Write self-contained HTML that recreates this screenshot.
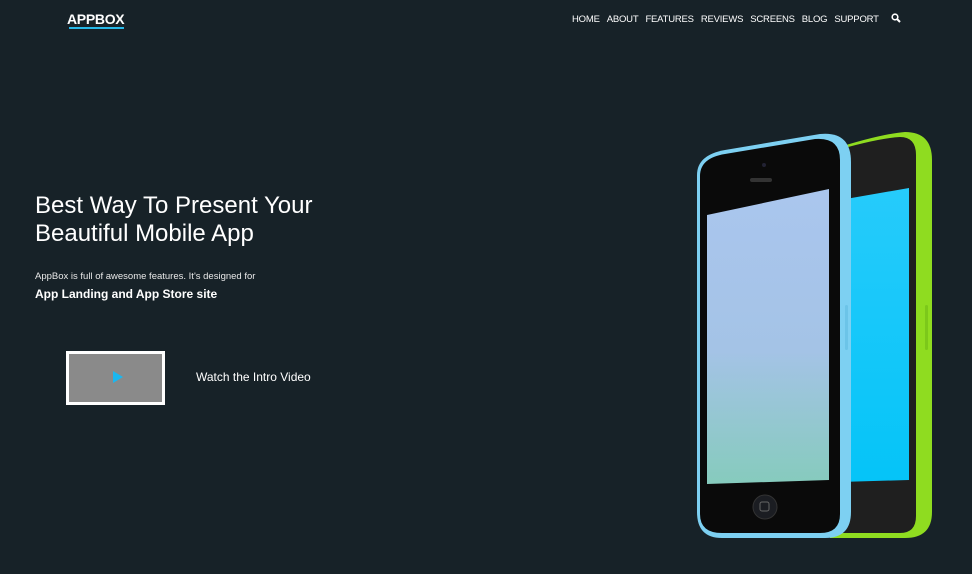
<!DOCTYPE html>
<html><head><meta charset="utf-8"><style>
body{margin:0;width:972px;height:574px;background:#172228;overflow:hidden;font-family:"Liberation Sans",sans-serif;color:#fff;position:relative}
.logo{position:absolute;left:67px;top:11px;font-size:14px;font-weight:bold;letter-spacing:-0.3px}
.logo:after{content:"";position:absolute;left:2px;right:0;top:16px;height:2px;background:#27b8e8}
nav{position:absolute;top:13px;left:572px;font-size:9.5px;white-space:nowrap;letter-spacing:-0.2px}
nav span{margin-right:7px}
h1{position:absolute;left:35px;top:192px;margin:0;font-weight:normal;font-size:24px;line-height:28px}
.p1{position:absolute;left:35px;top:271px;font-size:9.5px;color:#e8e8e8}
.p2{position:absolute;left:35px;top:287px;font-size:12px;font-weight:bold}
.vid{position:absolute;left:66px;top:351px;width:93px;height:48px;border:3px solid #fff;background:#8a8a8a}
.vid:after{content:"";position:absolute;left:44px;top:17px;border-left:10px solid #1ab7f0;border-top:6px solid transparent;border-bottom:6px solid transparent}
.w{position:absolute;left:196px;top:370px;font-size:12px}
svg{position:absolute;left:0;top:0}
</style></head><body>
<div class="logo">APPBOX</div>
<nav><span>HOME</span><span>ABOUT</span><span>FEATURES</span><span>REVIEWS</span><span>SCREENS</span><span>BLOG</span><span>SUPPORT</span>
<svg style="position:relative;display:inline-block;vertical-align:-1px;margin-left:3px" width="10" height="10" viewBox="0 0 10 10"><circle cx="4" cy="4" r="2.8" stroke="#fff" stroke-width="1.6" fill="none"/><path d="M6 6L9 9" stroke="#fff" stroke-width="2"/></svg></nav>
<h1>Best Way To Present Your<br>Beautiful Mobile App</h1>
<div class="p1">AppBox is full of awesome features. It's designed for</div>
<div class="p2">App Landing and App Store site</div>
<div class="vid"></div>
<div class="w">Watch the Intro Video</div>
<svg width="972" height="574">
<defs>
<linearGradient id="bs" x1="0" y1="0" x2="0" y2="1"><stop offset="0" stop-color="#aac6ee"/><stop offset="0.55" stop-color="#a4c3e6"/><stop offset="1" stop-color="#86cbbd"/></linearGradient>
<linearGradient id="gs" x1="0" y1="0" x2="0" y2="1"><stop offset="0" stop-color="#26cbfb"/><stop offset="1" stop-color="#05c4f8"/></linearGradient>
</defs>
<!-- green phone -->
<path d="M830 150 Q880 134 905 132 Q932 132 932 160 L932 512 Q932 538 905 538 L830 538 Z" fill="#8fdc20"/>
<path d="M830 152 Q878 138 900 137 Q916 137 916 155 L916 516 Q916 533 900 533 L830 533 Z" fill="#1f1f1f"/>
<path d="M840 200 L909 188 L909 480 L840 482 Z" fill="url(#gs)"/>
<!-- blue phone -->
<path d="M697 175 Q697 155 725 150 L820 134 Q851 131 851 162 L851 512 Q851 538 825 538 L722 538 Q697 538 697 512 Z" fill="#7dd0f2"/>
<path d="M700 176 Q700 158 725 154 L815 139 Q840 137 840 160 L840 514 Q840 533 820 533 L722 533 Q700 533 700 514 Z" fill="#0a0a0a"/>
<path d="M707 215 L829 189 L829 480 L707 484 Z" fill="url(#bs)"/>
<rect x="750" y="178" width="22" height="4" rx="2" fill="#333"/>
<circle cx="764" cy="165" r="2" fill="#223"/>
<circle cx="765" cy="507" r="12" fill="#1b1d22" stroke="#333"/>
<rect x="760" y="502" width="9" height="9" rx="2" fill="none" stroke="#666"/>
<rect x="845" y="305" width="3" height="45" rx="1.5" fill="#6cc4e8"/>
<rect x="925" y="305" width="3" height="45" rx="1.5" fill="#7cc81a"/>
</svg>
</body></html>
